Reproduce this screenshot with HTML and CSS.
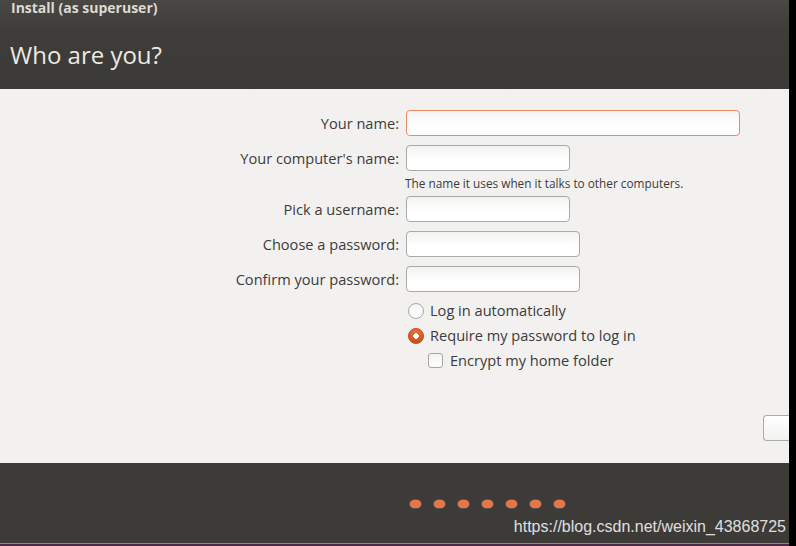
FILE: index.html
```html
<!DOCTYPE html>
<html lang="en">
<head>
<meta charset="utf-8">
<title>Who are you?</title>
<link rel="stylesheet" href="styles.css">
</head>
<body>
<div class="screen">
  <div class="main">
    <header class="header">
      <div class="win-title">Install (as superuser)</div>
      <h1 class="page-title">Who are you?</h1>
    </header>
    <section class="content">
      <div class="row row-first">
        <label class="label">Your name:</label>
        <div class="field field-wide field-focus"></div>
      </div>
      <div class="row row-gap">
        <label class="label">Your computer's name:</label>
        <div class="field field-short"></div>
      </div>
      <div class="hint">The name it uses when it talks to other computers.</div>
      <div class="row">
        <label class="label">Pick a username:</label>
        <div class="field field-short"></div>
      </div>
      <div class="row row-gap">
        <label class="label">Choose a password:</label>
        <div class="field field-mid"></div>
      </div>
      <div class="row row-gap">
        <label class="label">Confirm your password:</label>
        <div class="field field-mid"></div>
      </div>
      <div class="option option-first">
        <span class="radio"></span>
        <span class="option-text">Log in automatically</span>
      </div>
      <div class="option">
        <span class="radio radio-on"></span>
        <span class="option-text">Require my password to log in</span>
      </div>
      <div class="option option-sub">
        <span class="check"></span>
        <span class="option-text">Encrypt my home folder</span>
      </div>
      <div class="button-row">
        <div class="button"></div>
      </div>
    </section>
    <footer class="footer">
      <div class="dots">
        <span class="dot"></span><span class="dot"></span><span class="dot"></span><span class="dot"></span><span class="dot"></span><span class="dot"></span><span class="dot"></span>
      </div>
      <div class="watermark">https://blog.csdn.net/weixin_43868725</div>
    </footer>
    <div class="bottom-edge"></div>
  </div>
  <div class="black-strip"></div>
</div>
</body>
</html>
```

FILE: styles.css
```css
* { box-sizing: border-box; }
html, body { margin: 0; padding: 0; }
body {
  width: 796px;
  height: 546px;
  overflow: hidden;
  background: #000;
  font-family: "Open Sans", "Noto Sans", sans-serif;
}
.screen {
  display: flex;
  width: 796px;
  height: 546px;
}
.main {
  width: 789px;
  display: flex;
  flex-direction: column;
}
.black-strip {
  width: 7px;
  background: #000;
}
.header {
  height: 89px;
  background: linear-gradient(#4a4844 0px, #3e3d39 30px, #3b3a36 89px);
  padding-left: 11px;
  overflow: hidden;
}
.win-title {
  color: #dedad2;
  font-weight: 700;
  font-size: 14px;
  line-height: 14px;
  padding-top: 1px;
}
.page-title {
  margin: 24px 0 0 -1px;
  font-weight: 400;
  font-size: 24px;
  line-height: 32px;
  color: #ece9e3;
}
.content {
  height: 374px;
  background: #f2f1f0;
  display: flex;
  flex-direction: column;
  color: #3c3c3c;
  font-size: 14.6px;
}
.row {
  display: flex;
  align-items: center;
  height: 26px;
  gap: 7px;
}
.row-first { margin-top: 21px; }
.row-gap { margin-top: 9px; }
.label {
  width: 399px;
  text-align: right;
  line-height: 26px;
}
.field {
  height: 26px;
  border: 1px solid #a9a9a6;
  border-radius: 4px;
  background: linear-gradient(#f3f3f2, #ffffff 60%);
}
.field-focus { border-color: #ec8a62; }
.field-wide { width: 334px; }
.field-short { width: 164px; }
.field-mid { width: 174px; }
.hint {
  height: 25px;
  line-height: 24px;
  padding-left: 405px;
  font-size: 11.8px;
  color: #3c3c3c;
}
.option {
  display: flex;
  align-items: center;
  height: 25px;
  padding-left: 408px;
  gap: 6px;
}
.option-first { margin-top: 6px; }
.option-sub { padding-left: 428px; gap: 7px; }
.radio {
  width: 16px;
  height: 16px;
  border-radius: 50%;
  border: 1px solid #a6a6a3;
  background: linear-gradient(#f4f4f3, #ffffff);
}
.radio-on {
  border-color: #b2471a;
  background: radial-gradient(circle, #ffffff 0, #ffffff 2.5px, transparent 3px),
              linear-gradient(#e8703d, #c9501f);
}
.check {
  width: 15px;
  height: 15px;
  border-radius: 3px;
  border: 1px solid #a6a6a3;
  background: linear-gradient(#f4f4f3, #ffffff);
}
.option-text { line-height: 25px; }
.button-row {
  display: flex;
  justify-content: flex-end;
  margin-top: 42px;
}
.button {
  width: 26px;
  height: 26px;
  border: 1px solid #a9a9a6;
  border-right: none;
  border-radius: 4px 0 0 4px;
  background: linear-gradient(#ffffff, #f1f1f0);
}
.footer {
  position: relative;
  height: 81px;
  background: #3c3b37;
  border-bottom: 1px solid #8b8790;
}
.dots {
  display: flex;
  gap: 13px;
  padding: 37px 0 0 410px;
}
.dot {
  width: 11px;
  height: 8px;
  border-radius: 5px / 4px;
  background: #ec7344;
  box-shadow: 0 0 0 0.5px #8a7f78;
}
.watermark {
  position: absolute;
  right: 3px;
  top: 54px;
  font-family: "Liberation Sans", Arial, sans-serif;
  font-size: 16px;
  line-height: 19px;
  color: #dcdcdc;
  text-shadow: 0 0 1px #555;
}
.bottom-edge {
  height: 2px;
  background: #4a2a45;
}
```
